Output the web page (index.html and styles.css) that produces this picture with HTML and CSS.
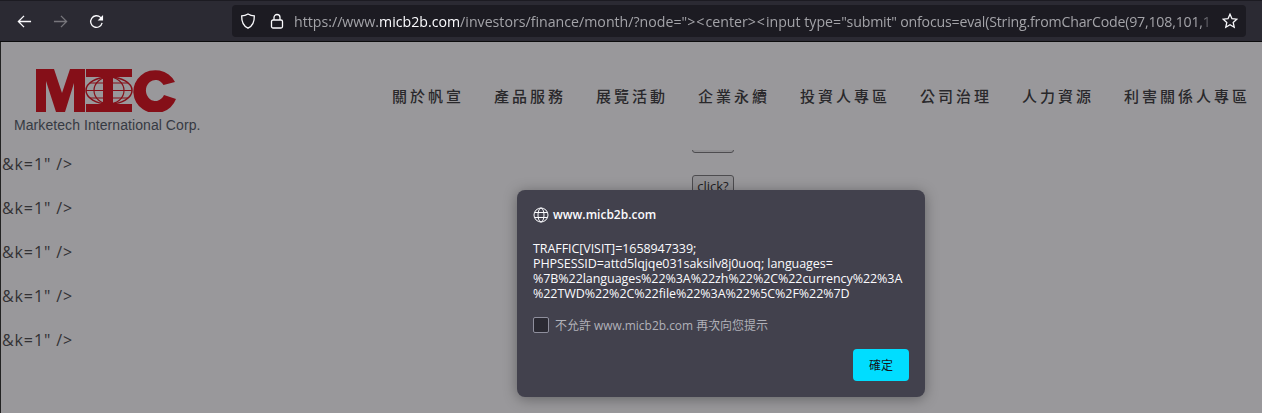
FILE: index.html
```html
<!DOCTYPE html>
<html lang="zh-Hant">
<head>
<meta charset="utf-8">
<title>www.micb2b.com</title>
<link rel="stylesheet" href="styles.css">
</head>
<body>
<div class="toolbar">
  <div class="nav-buttons">
    <svg class="tool-icon" viewBox="0 0 16 16"><path d="M15 8H1.500M7.500 2 1.500 8l6 6"/></svg>
    <svg class="tool-icon dim" viewBox="0 0 16 16"><path d="M1 8h13.500M8.500 2l6 6-6 6"/></svg>
    <svg class="tool-icon" viewBox="0 0 16 16"><path d="M14 9.500A6.200 6.200 0 1 1 12.300 3.600L14 5.600"/><path class="solid" d="M15 1v5.800H9.200z"/></svg>
  </div>
  <div class="urlbar">
    <svg class="url-icon" viewBox="0 0 16 16"><path d="M8 1c2 1.200 4 1.800 6.300 1.900C14.500 9 12.500 13 8 15.200 3.500 13 1.500 9 1.700 2.900 4 2.800 6 2.200 8 1z"/></svg>
    <svg class="url-icon lock" viewBox="0 0 16 16"><rect x="2.500" y="7" width="11" height="8" rx="1.500"/><path d="M5 7V4.500a3 3 0 0 1 6 0V7"/></svg>
    <div class="url">https://www.<b>micb2b.com</b>/investors/finance/month/?node="<span class="url-wide">&gt;&lt;</span>center<span class="url-wide">&gt;&lt;</span>input type=<span class="url-tight">"submit" onfocus=eval(String.fromCharCode(97,108,101,1</span></div>
    <svg class="url-icon star" viewBox="0 0 16 16"><path d="M8 1.200l2 4.500 4.800.5-3.600 3.200 1 4.800L8 11.800l-4.200 2.400 1-4.800L1.200 6.200 6 5.700z"/></svg>
  </div>
</div>
<div class="page">
  <header class="site-header">
    <div class="brand">
      <svg class="logo" viewBox="0 0 141 43">
        <path class="logo-fill" d="M0 0H18L26 24 34 0H49V43H38V14L29 43H20L10 12V43H0Z"/>
        <path class="logo-fill" d="M50 0H96V8H50ZM50 35H96V43H50ZM67 8H77V35H67Z"/>
        <g class="logo-line">
          <ellipse cx="73" cy="21.500" rx="23" ry="13.500"/>
          <ellipse cx="73" cy="21.500" rx="15" ry="13.500"/>
          <path d="M50 21.500H96M54 14H92M54 29H92"/>
        </g>
        <path class="logo-fill" d="M139 13A22 21.500 0 1 0 140 30L128 26A9.500 10.500 0 1 1 127.500 16Z"/>
      </svg>
      <div class="brand-name">Marketech International Corp.</div>
    </div>
    <nav class="site-nav">
      <a>關於帆宣</a><a>產品服務</a><a>展覽活動</a><a>企業永續</a><a>投資人專區</a><a>公司治理</a><a>人力資源</a><a>利害關係人專區</a>
    </nav>
  </header>
  <main class="content">
    <div class="leftovers">
      <p>&amp;k=1" /&gt;</p>
      <p>&amp;k=1" /&gt;</p>
      <p>&amp;k=1" /&gt;</p>
      <p>&amp;k=1" /&gt;</p>
      <p>&amp;k=1" /&gt;</p>
    </div>
    <div class="injected">
      <button class="inj-btn" type="button" aria-label="click?"></button>
      <button class="inj-btn" type="button">click?</button>
    </div>
  </main>
  <div class="scrim">
    <div class="dialog">
      <div class="dialog-host">
        <svg class="globe" viewBox="0 0 16 16"><circle cx="8" cy="8" r="7"/><ellipse cx="8" cy="8" rx="3" ry="7"/><path d="M1.500 5.500h13M1.500 10.500h13"/></svg>
        <span>www.micb2b.com</span>
      </div>
      <div class="dialog-msg">TRAFFIC[VISIT]=1658947339;<br>PHPSESSID=attd5lqjqe031saksilv8j0uoq; languages=<br>%7B%22languages%22%3A%22zh%22%2C%22currency%22%3A<br>%22TWD%22%2C%22file%22%3A%22%5C%2F%22%7D</div>
      <label class="dialog-check"><span class="checkbox"></span><span>不允許 www.micb2b.com 再次向您提示</span></label>
      <div class="dialog-actions"><button class="ok" type="button">確定</button></div>
    </div>
  </div>
</div>
</body>
</html>
```
FILE: styles.css
```css
* { box-sizing: border-box; }
html, body { margin: 0; height: 100%; overflow: hidden; background: #fff; }
body { font-family: "Open Sans", "Noto Sans CJK TC", sans-serif; }

.toolbar {
  height: 42px;
  background: #2b2a33;
  border-top: 1px solid #1c1b22;
  border-bottom: 1px solid #0c0c0d;
  display: flex;
  align-items: center;
  padding: 0 16px 0 17px;
}
.nav-buttons { display: flex; gap: 21px; width: 215px; flex: none; }
.tool-icon { width: 15px; height: 15px; fill: none; stroke: #fbfbfe; stroke-width: 1.400; }
.tool-icon.dim { stroke: #77767c; }
.tool-icon .solid { fill: #fbfbfe; stroke: none; }
.urlbar {
  flex: 1;
  height: 32px;
  background: #1c1b22;
  border-radius: 4px;
  display: flex;
  align-items: center;
  padding: 0 8px;
  min-width: 0;
}
.url-icon { width: 16px; height: 16px; flex: none; fill: none; stroke: #fbfbfe; stroke-width: 1.300; }
.url-icon.lock { margin-left: 13px; }
.url-icon.star { margin-left: 8px; }
.url {
  flex: 1;
  min-width: 0;
  margin-left: 9px;
  white-space: nowrap;
  overflow: hidden;
  font-size: 14.180px;
  color: #a3a3a8;
  -webkit-mask-image: linear-gradient(to right, #000 calc(100% - 14px), transparent);
  mask-image: linear-gradient(to right, #000 calc(100% - 14px), transparent);
}
.url b { font-weight: 400; color: #fbfbfe; }
.url-wide { letter-spacing: 1px; }
.url-tight { letter-spacing: -.2px; }

.page { position: relative; height: 371px; overflow: hidden; background: #fff; border-left: 1px solid #222; }

.site-header { height: 108px; display: flex; justify-content: space-between; align-items: flex-start; }
.brand { margin: 27px 0 0 13px; display: flex; flex-direction: column; }
.logo { display: block; width: 141px; height: 43px; margin-left: 22px; }
.logo-fill { fill: #db0712; }
.logo-line { fill: none; stroke: #db0712; stroke-width: 1.200; }
.logo-line ellipse:first-child { stroke-width: 1.500; }
.brand-name { margin-top: 4px; font: 14px/18px "Liberation Sans", Arial, sans-serif; letter-spacing: .07px; color: #4c5560; white-space: nowrap; }
.site-nav { display: flex; gap: 30px; margin: 43px 12px 0 0; font: 500 15px/22px "Noto Sans CJK TC", sans-serif; letter-spacing: 3px; color: #333; }

.content { height: 263px; overflow: hidden; display: grid; grid-template-columns: 691px auto; }
.leftovers { font-size: 16px; color: #444; letter-spacing: .9px; }
.leftovers p { margin: 0 0 16px 1px; line-height: 28px; }
.injected { display: flex; flex-direction: column; align-items: flex-start; gap: 22px; margin-top: -19px; }
.inj-btn {
  width: 42px; height: 22px; padding: 0;
  font: 13px "Open Sans", sans-serif;
  color: #222;
  background: #efefef;
  border: 1px solid #767676;
  border-radius: 3px;
}

.scrim {
  position: absolute;
  inset: 0;
  background: rgba(28, 27, 34, .45);
  padding: 148px 0 0 516px;
}
.dialog {
  width: 408px;
  height: 207px;
  background: #42414d;
  border-radius: 8px;
  padding: 16px;
  color: #fbfbfe;
  box-shadow: 0 2px 14px rgba(0, 0, 0, .35);
}
.dialog-host { display: flex; align-items: center; gap: 4px; height: 17px; font-size: 12px; font-weight: 600; }
.globe { width: 16px; height: 16px; fill: none; stroke: #fbfbfe; stroke-width: 1; }
.dialog-msg { margin-top: 18px; font-size: 12.500px; line-height: 15px; white-space: nowrap; letter-spacing: -.07px; }
.dialog-check { margin-top: 16px; display: flex; align-items: center; gap: 6px; height: 16px; font-size: 11.950px; color: #b1b1b9; }
.checkbox { width: 16px; height: 16px; background: #2b2a33; border: 1px solid #8f8f9d; border-radius: 2px; flex: none; }
.dialog-actions { margin-top: 16px; display: flex; justify-content: flex-end; }
.ok {
  width: 56px; height: 32px;
  padding: 0 0 2px;
  background: #00ddff;
  border: 0;
  border-radius: 4px;
  color: #15141a;
  font: 12px "Noto Sans CJK TC", sans-serif;
}
```
